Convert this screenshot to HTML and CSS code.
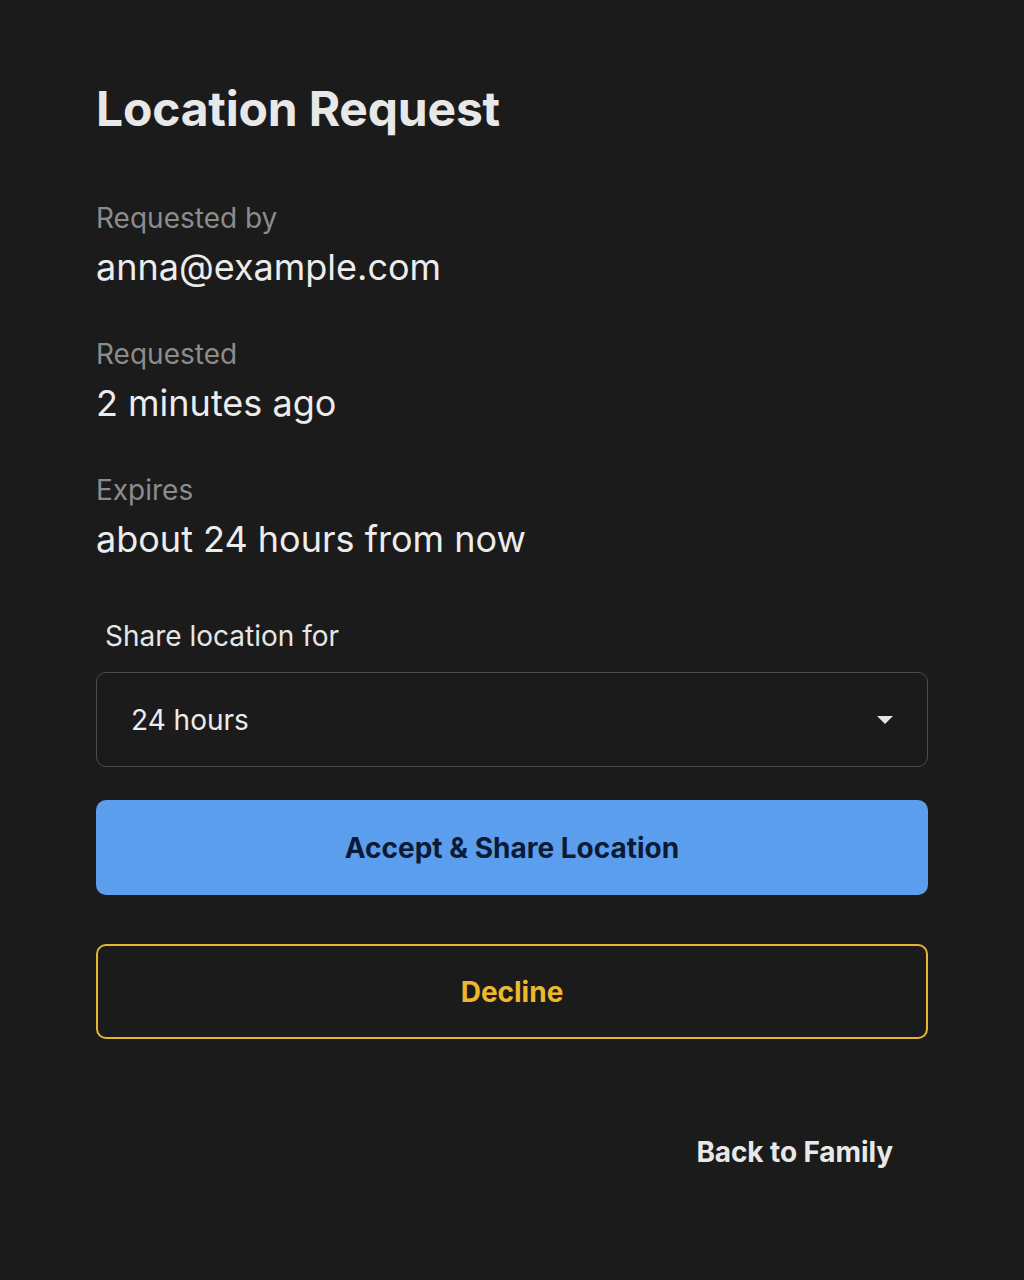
FILE: index.html
```html
<!DOCTYPE html>
<html>
<head>
<meta charset="utf-8">
<link rel="stylesheet" href="styles.css">
</head>
<body>
<main class="page">
  <h1 class="title">Location Request</h1>
  <section class="field">
    <div class="label">Requested by</div>
    <div class="value">anna@example.com</div>
  </section>
  <section class="field">
    <div class="label">Requested</div>
    <div class="value">2 minutes ago</div>
  </section>
  <section class="field">
    <div class="label">Expires</div>
    <div class="value">about 24 hours from now</div>
  </section>
  <div class="share-label">Share location for</div>
  <div class="select">
    <span class="select-text">24 hours</span>
    <svg class="caret" width="16" height="10" viewBox="0 0 16 10"><path d="M0 1 L16 1 L8 9 Z" fill="#e6e6e6"/></svg>
  </div>
  <button class="btn btn-primary">Accept &amp; Share Location</button>
  <button class="btn btn-outline">Decline</button>
  <div class="back-row">
    <button class="btn-text">Back to Family</button>
  </div>
</main>
</body>
</html>
```

FILE: styles.css
```css
html, body {
  margin: 0;
  padding: 0;
  background: #1b1b1b;
}
body {
  font-family: Inter, "Noto Sans", sans-serif;
  color: #ececec;
  min-height: 1280px;
}
.page {
  width: 832px;
  padding: 80px 96px 0 96px;
  display: flex;
  flex-direction: column;
}
.title {
  margin: 0;
  font-size: 48px;
  line-height: 58px;
  font-weight: 700;
  color: #e8e8e8;
  letter-spacing: -0.2px;
}
.field {
  display: flex;
  flex-direction: column;
  gap: 9px;
  margin-top: 62px;
}
.field + .field {
  margin-top: 47px;
}
.label {
  font-size: 28px;
  line-height: 36px;
  color: #8c8c8c;
}
.value {
  font-size: 36px;
  line-height: 44px;
  color: #ececec;
}
.share-label {
  margin-top: 55px;
  padding-left: 9px;
  font-size: 28px;
  line-height: 40px;
  color: #e6e6e6;
}
.select {
  margin-top: 16px;
  height: 93px;
  border: 1px solid #4d4d4d;
  border-radius: 10px;
  display: flex;
  align-items: center;
  justify-content: space-between;
  padding: 0 34px;
}
.select-text {
  font-size: 28px;
  color: #ececec;
}
.caret {
  display: block;
}
.btn {
  width: 100%;
  height: 95px;
  border-radius: 10px;
  font-family: Inter, "Noto Sans", sans-serif;
  font-size: 28px;
  font-weight: 700;
  cursor: pointer;
}
.btn-primary {
  margin-top: 33px;
  background: #5b9eed;
  border: none;
  color: #0d1a36;
}
.btn-outline {
  margin-top: 49px;
  background: transparent;
  border: 2px solid #e8b62e;
  color: #ecb82e;
}
.back-row {
  display: flex;
  justify-content: flex-end;
  margin-top: 85px;
}
.btn-text {
  background: transparent;
  border: none;
  font-family: Inter, "Noto Sans", sans-serif;
  font-size: 28px;
  font-weight: 700;
  color: #e8e8e8;
  padding: 8px 35px;
  line-height: 40px;
  letter-spacing: -0.1px;
}
```
